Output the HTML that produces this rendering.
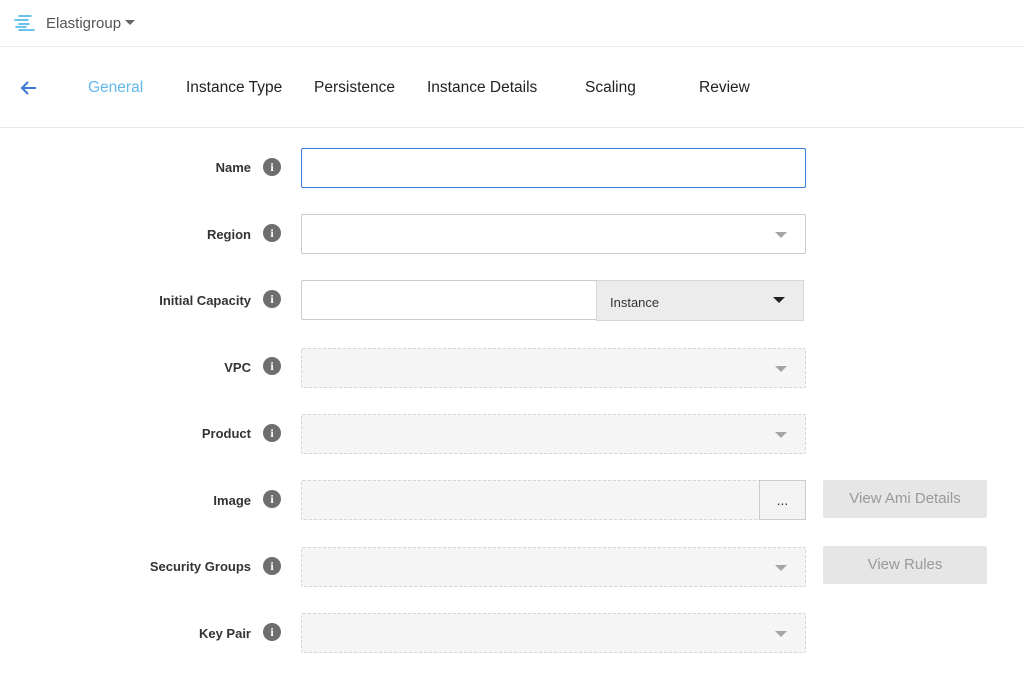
<!DOCTYPE html>
<html><head><style>
*{margin:0;padding:0;box-sizing:border-box}
body{width:1024px;height:688px;background:#fff;font-family:"Liberation Sans",sans-serif;position:relative;overflow:hidden;color:#333}
.a{position:absolute}
.hdr{left:0;top:0;width:1024px;height:47px;border-bottom:1px solid #ececec}
.nav{left:0;top:47px;width:1024px;height:81px;border-bottom:1px solid #e6e6e6}
.tab{top:79px;font-size:15.5px;color:#222}
.lbl{right:773px;font-size:13px;font-weight:bold;color:#333;text-align:right}
.info{left:263px;width:18px;height:18px;border-radius:50%;background:#6e6e6e;color:#fff;font-size:12px;font-weight:bold;text-align:center;line-height:18px;font-family:"Liberation Serif",serif}
.box{left:301px;width:505px;height:40px;border:1px solid #ccc;background:#fff;border-radius:2px}
.dis{border:1px dashed #d6d6d6;background:#f5f5f5}
.car{position:absolute;right:18px;top:17px;width:0;height:0;border-left:6px solid transparent;border-right:6px solid transparent;border-top:6px solid #a5a5a5}
.btn{left:823px;width:164px;height:38px;background:#e6e6e6;border-radius:2px;color:#9a9a9a;font-size:15px;text-align:center;line-height:38px}
</style></head><body>
<div class="a hdr"></div>
<svg class="a" style="left:14px;top:14px" width="22" height="18" viewBox="0 0 22 18"><g stroke="#3aaee6" stroke-width="1.6" stroke-linecap="round"><path d="M5 2H17M1 6H14M5 10H15M2 13H12M5 16H20"/></g></svg>
<div class="a" style="left:46px;top:15px;font-size:15px;color:#555">Elastigroup</div>
<div class="a" style="left:125px;top:20px;border-left:5px solid transparent;border-right:5px solid transparent;border-top:5px solid #666"></div>
<div class="a nav"></div>
<svg class="a" style="left:20px;top:80px" width="18" height="16" viewBox="0 0 18 16"><path d="M16 8H3M8 2L2 8l6 6" fill="none" stroke="#3a7bd5" stroke-width="2"/></svg>
<div class="a tab" style="left:88px;color:#62b8ef">General</div>
<div class="a tab" style="left:186px">Instance Type</div>
<div class="a tab" style="left:314px">Persistence</div>
<div class="a tab" style="left:427px">Instance Details</div>
<div class="a tab" style="left:585px">Scaling</div>
<div class="a tab" style="left:699px">Review</div>

<div class="a lbl" style="top:160px">Name</div><div class="a info" style="top:158px">i</div>
<div class="a box" style="top:148px;border-color:#3a7bd5"></div>

<div class="a lbl" style="top:227px">Region</div><div class="a info" style="top:224px">i</div>
<div class="a box" style="top:214px"><div class="car"></div></div>

<div class="a lbl" style="top:293px">Initial Capacity</div><div class="a info" style="top:290px">i</div>
<div class="a box" style="top:280px;width:296px"></div>
<div class="a" style="left:596px;top:280px;width:208px;height:41px;background:#ececec;border:1px solid #d6d6d6"><span style="position:absolute;left:13px;top:14px;font-size:13px;color:#333">Instance</span><div class="car" style="border-top-color:#222;right:18px;top:16px"></div></div>

<div class="a lbl" style="top:360px">VPC</div><div class="a info" style="top:357px">i</div>
<div class="a box dis" style="top:348px"><div class="car"></div></div>

<div class="a lbl" style="top:426px">Product</div><div class="a info" style="top:424px">i</div>
<div class="a box dis" style="top:414px"><div class="car"></div></div>

<div class="a lbl" style="top:493px">Image</div><div class="a info" style="top:490px">i</div>
<div class="a box dis" style="top:480px"></div>
<div class="a" style="left:759px;top:480px;width:47px;height:40px;border:1px solid #ccc;background:#f3f3f3;text-align:center;font-size:14px;line-height:38px;color:#333">...</div>
<div class="a btn" style="top:480px">View Ami Details</div>

<div class="a lbl" style="top:559px">Security Groups</div><div class="a info" style="top:557px">i</div>
<div class="a box dis" style="top:547px"><div class="car"></div></div>
<div class="a btn" style="top:546px">View Rules</div>

<div class="a lbl" style="top:626px">Key Pair</div><div class="a info" style="top:623px">i</div>
<div class="a box dis" style="top:613px"><div class="car"></div></div>
</body></html>
